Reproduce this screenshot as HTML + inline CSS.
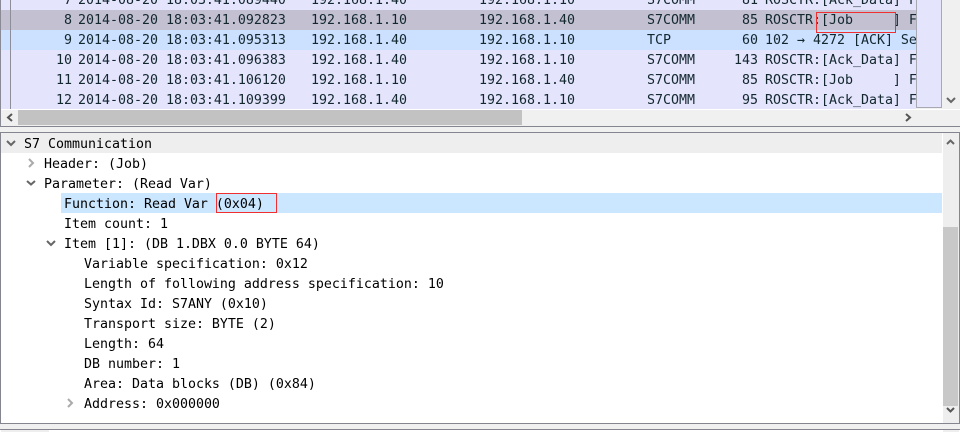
<!DOCTYPE html>
<html><head><meta charset="utf-8"><style>
html,body{margin:0;padding:0;background:#f0f0f0;}
#r{position:relative;width:960px;height:432px;overflow:hidden;background:#f0f0f0;font-family:"DejaVu Sans Mono","Liberation Mono",monospace;font-size:13.29px;color:#12272e;}
.a{position:absolute;}
.t{position:absolute;white-space:pre;line-height:20px;height:20px;}
.row{position:absolute;left:1px;width:915px;height:20px;overflow:hidden;}
.row .t{top:1px;}
.n{left:0;width:71px;text-align:right;}
.l{left:680px;width:77px;text-align:right;}
.d .t{color:#000;margin-top:2px;}
</style></head><body><div id="r">
<div class="a" style="left:0;top:0;width:960px;height:126px;background:#f0f0f0;"></div>
<div class="a" style="left:1px;top:0;width:915px;height:109px;background:#e4e4fc;"></div>
<div class="row" style="top:-10px;"><span class="t n">7</span><span class="t" style="left:77px;">2014-08-20 18:03:41.089440</span><span class="t" style="left:310px;">192.168.1.40</span><span class="t" style="left:478px;">192.168.1.10</span><span class="t" style="left:646px;">S7COMM</span><span class="t l">81</span><span class="t" style="left:764px;">ROSCTR:[Ack_Data] F</span></div>
<div class="row" style="top:10px;background:#c3c0d2;"><span class="t n">8</span><span class="t" style="left:77px;">2014-08-20 18:03:41.092823</span><span class="t" style="left:310px;">192.168.1.10</span><span class="t" style="left:478px;">192.168.1.40</span><span class="t" style="left:646px;">S7COMM</span><span class="t l">85</span><span class="t" style="left:764px;">ROSCTR:[Job     ] F</span></div>
<div class="row" style="top:30px;background:#cce0ff;"><span class="t n">9</span><span class="t" style="left:77px;">2014-08-20 18:03:41.095313</span><span class="t" style="left:310px;">192.168.1.40</span><span class="t" style="left:478px;">192.168.1.10</span><span class="t" style="left:646px;">TCP</span><span class="t l">60</span><span class="t" style="left:764px;">102 → 4272 [ACK] Se</span></div>
<div class="row" style="top:50px;"><span class="t n">10</span><span class="t" style="left:77px;">2014-08-20 18:03:41.096383</span><span class="t" style="left:310px;">192.168.1.40</span><span class="t" style="left:478px;">192.168.1.10</span><span class="t" style="left:646px;">S7COMM</span><span class="t l">143</span><span class="t" style="left:764px;">ROSCTR:[Ack_Data] F</span></div>
<div class="row" style="top:70px;"><span class="t n">11</span><span class="t" style="left:77px;">2014-08-20 18:03:41.106120</span><span class="t" style="left:310px;">192.168.1.10</span><span class="t" style="left:478px;">192.168.1.40</span><span class="t" style="left:646px;">S7COMM</span><span class="t l">85</span><span class="t" style="left:764px;">ROSCTR:[Job     ] F</span></div>
<div class="row" style="top:90px;height:19px;"><span class="t n">12</span><span class="t" style="left:77px;">2014-08-20 18:03:41.109399</span><span class="t" style="left:310px;">192.168.1.40</span><span class="t" style="left:478px;">192.168.1.10</span><span class="t" style="left:646px;">S7COMM</span><span class="t l">95</span><span class="t" style="left:764px;">ROSCTR:[Ack_Data] F</span></div>
<div class="a" style="left:10px;top:0;width:1px;height:109px;background:#8e8e9a;"></div>
<div class="a" style="left:816px;top:12px;width:80px;height:21px;border:1px solid #f03030;box-sizing:border-box;"></div>
<div class="a" style="left:916px;top:0;width:26px;height:108px;background:#e4e4fc;border:1px solid #a8a8b4;border-top:0;box-sizing:border-box;"></div>
<div class="a" style="left:1px;top:109px;width:959px;height:1px;background:#fff;"></div>
<div class="a" style="left:18px;top:110px;width:504px;height:15px;background:#c2c2c2;"></div>
<div class="a" style="left:0;top:0;width:1px;height:126px;background:#8a8a96;"></div>
<div class="a" style="left:0;top:126px;width:960px;height:1px;background:#85858f;"></div>
<div class="a" style="left:0;top:132px;width:960px;height:292px;background:#fff;border:1px solid #85858f;box-sizing:border-box;"></div>
<div class="a" style="left:943px;top:133px;width:16px;height:290px;background:#eee;"></div>
<div class="a" style="left:943px;top:227px;width:15px;height:179px;background:#c8c8c8;"></div>
<div class="a" style="left:1px;top:133px;width:941px;height:20px;background:#eee;"></div>
<div class="a" style="left:61px;top:193px;width:881px;height:20px;background:#cbe6ff;"></div>
<div class="a" style="left:216px;top:193px;width:61px;height:20px;border:1px solid #f03030;box-sizing:border-box;"></div>
<div class="d">
<span class="t" style="left:24px;top:133px;">S7 Communication</span>
<span class="t" style="left:44px;top:153px;">Header: (Job)</span>
<span class="t" style="left:44px;top:173px;">Parameter: (Read Var)</span>
<span class="t" style="left:64px;top:193px;">Function: Read Var (0x04)</span>
<span class="t" style="left:64px;top:213px;">Item count: 1</span>
<span class="t" style="left:64px;top:233px;">Item [1]: (DB 1.DBX 0.0 BYTE 64)</span>
<span class="t" style="left:84px;top:253px;">Variable specification: 0x12</span>
<span class="t" style="left:84px;top:273px;">Length of following address specification: 10</span>
<span class="t" style="left:84px;top:293px;">Syntax Id: S7ANY (0x10)</span>
<span class="t" style="left:84px;top:313px;">Transport size: BYTE (2)</span>
<span class="t" style="left:84px;top:333px;">Length: 64</span>
<span class="t" style="left:84px;top:353px;">DB number: 1</span>
<span class="t" style="left:84px;top:373px;">Area: Data blocks (DB) (0x84)</span>
<span class="t" style="left:84px;top:393px;">Address: 0x000000</span>
</div>
<div class="a" style="left:0;top:429px;width:960px;height:3px;background:#fff;border-top:1px solid #85858f;box-sizing:border-box;"></div>
<div class="a" style="left:1px;top:430px;width:48px;height:2px;background:#eee;"></div>
<div class="a" style="left:943px;top:430px;width:16px;height:2px;background:#eee;"></div>
<svg class="a" style="left:0;top:0;" width="960" height="432" fill="none" stroke-width="2">
<path d="M12 114L8 117.500L12 121" stroke="#555"/>
<path d="M906 114L910 117.500L906 121" stroke="#555"/>
<path d="M947 98L951 102L955 98" stroke="#666"/>
<path d="M947 144L950.500 140.500L954 144" stroke="#666"/>
<path d="M947 408L950.500 411.500L954 408" stroke="#555"/>
<path d="M7 141L11 145L15 141" stroke="#666"/>
<path d="M29 159L33 163L29 167" stroke="#aaa"/>
<path d="M27 181L31 184.500L35 181" stroke="#666"/>
<path d="M47 241L51 245L55 241" stroke="#666"/>
<path d="M68 399L72 403L68 407" stroke="#aaa"/>
</svg>
</div></body></html>
